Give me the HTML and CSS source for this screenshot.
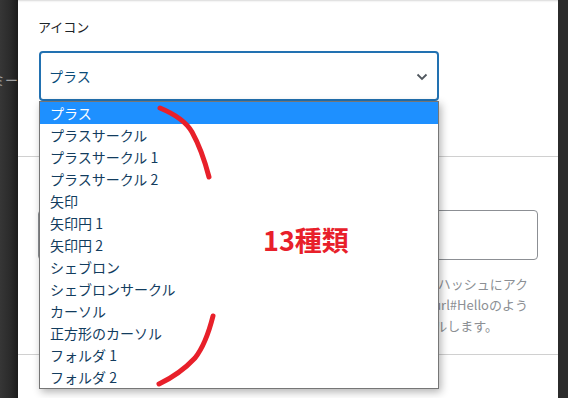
FILE: index.html
```html
<!DOCTYPE html>
<html lang="ja">

<head>
    <meta charset="UTF-8">
    <meta name="viewport" content="width=device-width, initial-scale=1.0">
    <title>アイコン設定</title>
    <link rel="stylesheet" href="styles.css">
</head>

<body>

    <div class="side side-left">
        <div class="side-text">ダミー</div>
    </div>

    <div class="panel">
        <div class="section">
            <div class="label">アイコン</div>
            <div class="select">
                <span>プラス</span>
                <svg class="chevron" width="12" height="8" viewBox="0 0 12 8">
                    <path d="M1.5 1.5 L6 6 L10.5 1.5" fill="none" stroke="#50575e" stroke-width="1.8" />
                </svg>
            </div>
        </div>

        <div class="section section-link">
            <div class="input"></div>
            <div class="help">
                <span>ページ内リンクを指定すると、クリック時にハッシュにアク</span>
                <span>セスします。例えば https://example.com/url#Helloのよう</span>
                <span class="last">に指定すると、該当箇所までスクロールします。</span>
            </div>
        </div>

        <div class="section section-empty"></div>

        <div class="options">
            <div class="option selected">プラス</div>
            <div class="option">プラスサークル</div>
            <div class="option">プラスサークル 1</div>
            <div class="option">プラスサークル 2</div>
            <div class="option">矢印</div>
            <div class="option">矢印円 1</div>
            <div class="option">矢印円 2</div>
            <div class="option">シェブロン</div>
            <div class="option">シェブロンサークル</div>
            <div class="option">カーソル</div>
            <div class="option">正方形のカーソル</div>
            <div class="option">フォルダ 1</div>
            <div class="option">フォルダ 2</div>
        </div>
    </div>

    <div class="side side-right"></div>

    <svg class="marks" width="568" height="398" viewBox="0 0 568 398">
        <path d="M160 108 Q184 118 192 132 Q202 150 209 177" />
        <path d="M213 316 Q206 344 195 358 Q180 374 159 384" />
    </svg>
    <div class="note">13種類</div>

</body>

</html>
```

FILE: styles.css
```css
* {
    box-sizing: border-box;
}

body {
    margin: 0;
    width: 568px;
    height: 398px;
    overflow: hidden;
    display: flex;
    position: relative;
    background-color: #2a2a2a;
    font-family: "Noto Sans CJK JP", "Noto Sans", sans-serif;
}

.side {
    height: 100%;
    flex-shrink: 0;
}

.side-left {
    width: 18px;
    background: linear-gradient(to right, #363636, #2a2a2a 60%, #1c1c1c);
    overflow: hidden;
    padding-top: 70px;
}

.side-text {
    display: flex;
    justify-content: flex-end;
    white-space: nowrap;
    font-size: 13px;
    line-height: 20px;
    color: #a0a0a0;
}

.side-right {
    width: 10px;
    background-color: #2b2b2b;
}

.panel {
    width: 540px;
    flex-shrink: 0;
    height: 100%;
    background-color: #fff;
    position: relative;
    box-shadow: inset 0 3px 2px -2px #d8d8d8;
}

.section {
    padding: 18px 20px 0 20px;
    border-bottom: 1px solid #d0d0d0;
}

.label {
    font-size: 13px;
    line-height: 18px;
    color: #1d2327;
    margin-bottom: 15px;
}

.select {
    margin-left: 1px;
    width: 400px;
    height: 50px;
    border: 2px solid #2271b1;
    border-radius: 4px;
    display: flex;
    align-items: center;
    justify-content: space-between;
    padding: 0 9px 0 8px;
    font-size: 14px;
    color: #0a4b78;
    margin-bottom: 55px;
}

.chevron {
    margin-top: 1px;
}

.section-link {
    padding-top: 53px;
}

.input {
    width: 500px;
    height: 50px;
    border: 1px solid #8c8f94;
    border-radius: 4px;
}

.help {
    display: flex;
    flex-direction: column;
    align-items: flex-end;
    width: 490px;
    margin-top: 13px;
    margin-bottom: 18px;
    font-size: 13px;
    line-height: 21px;
    color: #8c8f94;
    white-space: nowrap;
}

.help .last {
    margin-right: 30px;
}

.section-empty {
    border-bottom: none;
}

.options {
    position: absolute;
    left: 21px;
    top: 101px;
    width: 400px;
    border: 1px solid #767676;
    background-color: #fff;
    box-shadow: 2px 3px 8px rgba(0, 0, 0, 0.3);
}

.option {
    height: 22px;
    line-height: 22px;
    padding-left: 10px;
    font-size: 14px;
    color: #123c5e;
    white-space: nowrap;
}

.option.selected {
    background-color: #1e90ff;
    color: #fff;
}

.marks {
    position: absolute;
    left: 0;
    top: 0;
    pointer-events: none;
}

.marks path {
    fill: none;
    stroke: #e8202a;
    stroke-width: 5;
    stroke-linecap: round;
}

.note {
    position: absolute;
    left: 263px;
    top: 222px;
    font-size: 27px;
    line-height: 36px;
    font-weight: bold;
    color: #e8202a;
}
```
